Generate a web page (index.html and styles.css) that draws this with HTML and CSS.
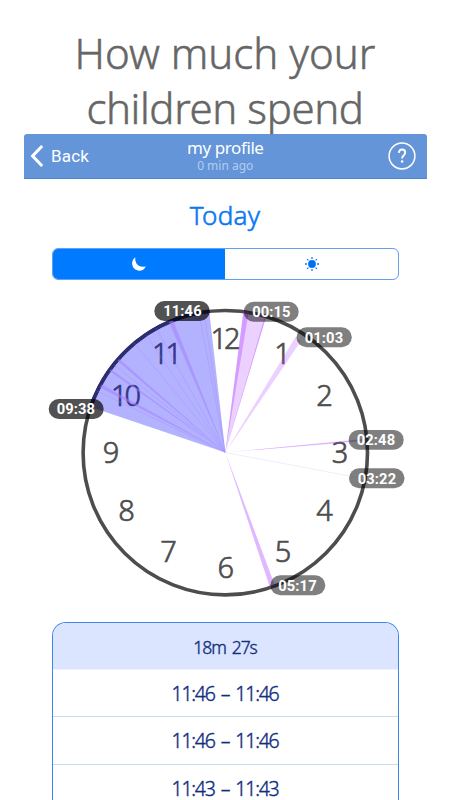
FILE: index.html
```html
<!DOCTYPE html>
<html lang="en">
<head>
<meta charset="utf-8">
<meta name="viewport" content="width=device-width, initial-scale=1">
<title>my profile</title>
<link rel="stylesheet" href="styles.css">
</head>
<body>
<main class="page">
  <h1 class="headline"><span class="headline-a">How much your</span><br><span class="headline-b">children spend</span></h1>
  <header class="navbar">
    <div class="back">
      <svg width="14" height="22" viewBox="0 0 14 22"><path d="M12.2 1 2.6 11l9.6 10" fill="none" stroke="#fff" stroke-width="3"/></svg>
      <span>Back</span>
    </div>
    <div class="titles">
      <div class="title">my profile</div>
      <div class="subtitle">0 min ago</div>
    </div>
    <div class="help">
      <svg width="28" height="28" viewBox="0 0 28 28"><circle cx="14" cy="14" r="12.9" fill="none" stroke="#fff" stroke-width="1.5"/><path d="M10.9 10.9c.1-2.2 1.3-3.4 3.2-3.4 1.9 0 3.1 1.2 3.1 3 0 1.3-.6 2-1.6 3-1.1 1-1.5 1.5-1.5 3" fill="none" stroke="#fff" stroke-width="1.9"/><circle cx="14.1" cy="19.4" r="1.25" fill="#fff"/></svg>
    </div>
  </header>
  <h2 class="day">Today</h2>
  <div class="segments">
    <div class="segment active">
      <svg width="16" height="16" viewBox="0 0 16 16"><path d="M4.4 1.2C.2 4 .3 9.600 3.200 12.600 6.800 16.200 12.900 15.200 14.800 10.200 8.600 12.400 3.200 7.600 4.400 1.200Z" fill="#fff"/></svg>
    </div>
    <div class="segment">
      <svg class="sun" width="16" height="16" viewBox="0 0 16 16"><circle cx="8" cy="8" r="3.9" fill="#0070f5"/><path d="M8 1v2M8 13v2M1 8h2M13 8h2M3.1 3.1l1.3 1.3M11.6 11.6l1.3 1.3M3.1 12.9l1.3-1.3M11.600 4.400l1.300-1.300" stroke="#1679ef" stroke-width="1.3"/></svg>
    </div>
  </div>
  <svg class="clock" width="370" height="310" viewBox="40 295 370 310">
    <circle class="ring" cx="225.3" cy="452.7" r="142.2"/>
    <g class="numbers">
      <text x="224" y="349">12</text><text x="281" y="364">1</text>
      <text x="323" y="406">2</text><text x="338.5" y="463">3</text>
      <text x="323" y="521">4</text><text x="281.5" y="562">5</text>
      <text x="224.2" y="578">6</text><text x="167" y="562">7</text>
      <text x="125" y="520.5">8</text><text x="109.5" y="463">9</text>
      <text x="124.5" y="406">10</text><text x="165.5" y="364">11</text>
    </g>
    <path class="night" d="M225.3 452.5 90.7 407A142.2 142.2 0 0 1 209.2 311.3Z"/>
    <path class="night-arc" d="M90.7 407A142.2 142.2 0 0 1 209.2 311.3"/>
    <g class="sessions">
      <path d="M225.3 452.5 169 322l4-2zM225.3 452.5 100 387.5l1.6-3zM225.3 452.5 109.5 371l1.5-1.8zM225.3 452.5 117.5 361l1.8-2z"/>
      <path class="faint" d="M225.3 452.5 114 365M225.3 452.5 134 343M225.3 452.5 146 335M225.3 452.5 156 328M225.3 452.5 199 313M225.3 452.5 204 312M225.3 452.5 97 391"/>
    </g>
    <path class="pale" d="M225.3 452.5 243.5 311l22.5 6z"/>
    <path class="violet" d="M225.3 452.5 243.5 311l5.2.8zM225.3 452.5 264.7 317l1.2.4z"/>
    <path class="pale" d="M225.3 452.5 295.5 337l5.5 4z"/>
    <path class="pale" d="M225.3 452.5 362 439l0 2.2z"/>
    <path class="violet" d="M225.3 452.5 362 439.8l0 .8zM225.3 452.5 270 587.5l5-1.7z"/>
    <path class="trace" d="M225.3 452.5 360 478"/>
    <g class="tags">
      <rect class="dark" x="154.3" y="301" width="55.5" height="20" rx="10"/><text x="182.5" y="316">11:46</text>
      <rect class="dark" x="48.7" y="399" width="55" height="20" rx="10"/><text x="75.9" y="414">09:38</text>
      <rect x="243.7" y="301.8" width="55" height="20" rx="10"/><text x="271.4" y="316.7">00:15</text>
      <rect x="296.5" y="327.2" width="55.3" height="20" rx="10"/><text x="324" y="342.5">01:03</text>
      <rect x="348.7" y="430" width="55" height="19.7" rx="9.8"/><text x="376" y="445">02:48</text>
      <rect x="349" y="468.2" width="55.5" height="20" rx="10"/><text x="377" y="483.5">03:22</text>
      <rect x="270.3" y="575.3" width="55" height="20" rx="10"/><text x="297.5" y="590.5">05:17</text>
    </g>
  </svg>
  <section class="log">
    <div class="row total">18m 27s</div>
    <div class="row">11:46 – 11:46</div>
    <div class="row">11:46 – 11:46</div>
    <div class="row">11:43 – 11:43</div>
  </section>
</main>
</body>
</html>
```
FILE: styles.css
```css
* { box-sizing: border-box; }
html, body { margin: 0; height: 800px; overflow: hidden; background: #fff; }
body { font-family: "Noto Sans", "Open Sans", sans-serif; }
.page { height: 800px; overflow: hidden; }
.headline { height: 134px; margin: 0; padding-top: 26px; text-align: center; color: #666; font-size: 42px; font-weight: 300; line-height: 54.5px; white-space: nowrap; -webkit-text-stroke: .5px #666; }
.headline-b { letter-spacing: -.4px; }
.navbar { display: grid; grid-template-columns: 100px 1fr 100px; align-items: center; height: 45px; margin: 0 23.5px 0 24px; border-radius: 3px 3px 0 0; border-bottom: 1px solid #4b88d2; background: #6495d8; color: #fff; }
.back { display: flex; align-items: center; gap: 7px; padding-left: 6px; font: 400 17px/20px Roboto, sans-serif; letter-spacing: .2px; }
.titles { text-align: center; }
.title { font-size: 17px; line-height: 18px; padding-top: 1px; letter-spacing: -.4px; }
.subtitle { color: #b3ccf0; font-size: 12px; line-height: 17px; }
.help { display: flex; justify-content: flex-end; padding-right: 11px; }
.day { height: 69px; margin: 0; padding-top: 18px; text-align: center; color: #0878f5; font-size: 26px; font-weight: 300; line-height: 36px; letter-spacing: .3px; -webkit-text-stroke: .6px #0878f5; }
.segments { display: flex; width: 347px; height: 32px; margin: 0 auto; border: 1px solid #65a0ed; border-radius: 6px; overflow: hidden; }
.segment { display: flex; flex: 1; align-items: center; justify-content: center; }
.active { background: #007aff; }
.sun { margin-left: 2px; }
.clock { display: block; margin: 15px 0 0 40px; }
.ring { fill: none; stroke: #4d4d4d; stroke-width: 3.6; }
.numbers { fill: #4d4d4d; stroke: #4d4d4d; stroke-width: .65; font-size: 29px; font-weight: 300; text-anchor: middle; letter-spacing: -3px; }
.night { fill: #0000ff; fill-opacity: .3; }
.night-arc { fill: none; stroke: #2c2d70; stroke-width: 3.6; }
.sessions { fill: #a87dff; fill-opacity: .55; }
.faint { fill: none; stroke: #a37eff; stroke-width: .7; stroke-opacity: .4; }
.pale { fill: #b040ff; fill-opacity: .24; }
.violet { fill: #b24dff; fill-opacity: .4; }
.trace { stroke: #eee9f5; stroke-width: .8; }
.tags { fill: #fff; font: 700 14.7px Roboto, sans-serif; text-anchor: middle; letter-spacing: .1px; }
.tags rect { fill: #000; fill-opacity: .5; }
.tags .dark { fill-opacity: .68; }
.log { width: 347px; height: 200px; margin: 17px auto 0; border: 1px solid #3d86ed; border-bottom: 0; border-radius: 14px 14px 0 0; overflow: hidden; color: #112f80; }
.row { display: flex; align-items: center; justify-content: center; height: 47.3px; padding-top: 1px; border-bottom: 1px solid #cbdcf2; font-size: 19.5px; font-weight: 300; letter-spacing: -1.25px; word-spacing: 2.3px; -webkit-text-stroke: .4px #112f80; }
.total { height: 47px; border-bottom-color: #eef2ff; background: #dce5ff; font-size: 17.5px; letter-spacing: -1px; }
```
